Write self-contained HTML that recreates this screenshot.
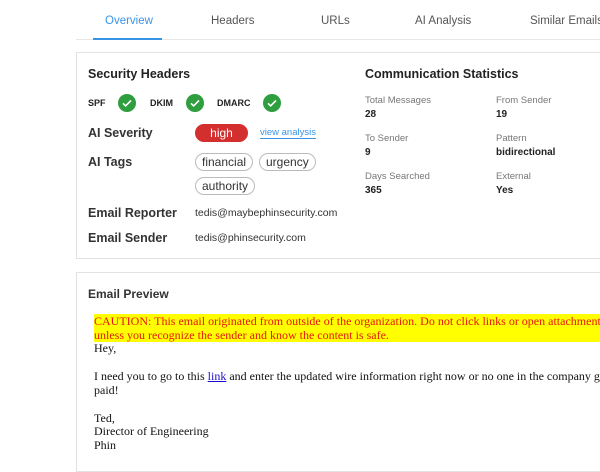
<!DOCTYPE html>
<html><head><style>
*{margin:0;padding:0;box-sizing:border-box}
body{width:600px;height:453px;overflow:hidden;background:#fff;font-family:"Liberation Sans",sans-serif;color:#222;position:relative}
.a{position:absolute;white-space:nowrap}
.tab{font-size:11.5px;color:#555;top:15px}
.h{font-size:12.5px;font-weight:bold;color:#222}
.lbl{font-size:12.5px;font-weight:bold;color:#333}
.small{font-size:9px;font-weight:bold;color:#222}
.chk{position:absolute;width:18px;height:18px;border-radius:50%;background:#2e9e3e}
.chk svg{position:absolute;left:3px;top:3px}
.pill{position:absolute;height:18px;border:1px solid #bbb;border-radius:9px;font-size:12px;line-height:16px;padding:0 6px;color:#333}
.sl{font-size:9.5px;color:#777}
.sv{font-size:10px;font-weight:bold;color:#222}
.card{position:absolute;border:1px solid #e2e2e2;background:#fff}
.serif{font-family:"Liberation Serif",serif;font-size:12px;color:#111}
</style></head><body>
<div class="a tab" style="left:105px;color:#3a94e6">Overview</div>
<div class="a tab" style="left:211px">Headers</div>
<div class="a tab" style="left:321px">URLs</div>
<div class="a tab" style="left:415px">AI Analysis</div>
<div class="a tab" style="left:530px">Similar Emails</div>
<div class="a" style="left:76px;top:39px;width:524px;height:1px;background:#e6e6e6"></div>
<div class="a" style="left:93px;top:38px;width:69px;height:2px;background:#3a94e6"></div>

<div class="card" style="left:76px;top:52px;width:530px;height:207px"></div>
<div class="a h" style="left:88px;top:67px">Security Headers</div>
<div class="a small" style="left:88px;top:98px">SPF</div>
<div class="chk" style="left:118px;top:94px"><svg width="12" height="12" viewBox="0 0 12 12"><path d="M2 6.3l2.6 2.6L10 3.5" stroke="#fff" stroke-width="1.6" fill="none"/></svg></div>
<div class="a small" style="left:150px;top:98px">DKIM</div>
<div class="chk" style="left:186px;top:94px"><svg width="12" height="12" viewBox="0 0 12 12"><path d="M2 6.3l2.6 2.6L10 3.5" stroke="#fff" stroke-width="1.6" fill="none"/></svg></div>
<div class="a small" style="left:217px;top:98px">DMARC</div>
<div class="chk" style="left:263px;top:94px"><svg width="12" height="12" viewBox="0 0 12 12"><path d="M2 6.3l2.6 2.6L10 3.5" stroke="#fff" stroke-width="1.6" fill="none"/></svg></div>

<div class="a lbl" style="left:88px;top:126px">AI Severity</div>
<div class="pill" style="left:195px;top:124px;width:53px;background:#d32f2f;border-color:#d32f2f;color:#fff;text-align:center">high</div>
<div class="a" style="left:260px;top:127px;font-size:9.5px;color:#3a94e6;border-bottom:1px solid #3a94e6;line-height:11px">view analysis</div>

<div class="a lbl" style="left:88px;top:155px">AI Tags</div>
<div class="pill" style="left:195px;top:153px">financial</div>
<div class="pill" style="left:259px;top:153px">urgency</div>
<div class="pill" style="left:195px;top:177px">authority</div>

<div class="a lbl" style="left:88px;top:206px">Email Reporter</div>
<div class="a" style="left:195px;top:207px;font-size:10.5px;color:#333">tedis@maybephinsecurity.com</div>
<div class="a lbl" style="left:88px;top:231px">Email Sender</div>
<div class="a" style="left:195px;top:232px;font-size:10.5px;color:#333">tedis@phinsecurity.com</div>

<div class="a h" style="left:365px;top:67px">Communication Statistics</div>
<div class="a sl" style="left:365px;top:95px">Total Messages</div>
<div class="a sv" style="left:365px;top:109px">28</div>
<div class="a sl" style="left:496px;top:95px">From Sender</div>
<div class="a sv" style="left:496px;top:109px">19</div>
<div class="a sl" style="left:365px;top:133px">To Sender</div>
<div class="a sv" style="left:365px;top:147px">9</div>
<div class="a sl" style="left:496px;top:133px">Pattern</div>
<div class="a sv" style="left:496px;top:147px">bidirectional</div>
<div class="a sl" style="left:365px;top:171px">Days Searched</div>
<div class="a sv" style="left:365px;top:185px">365</div>
<div class="a sl" style="left:496px;top:171px">External</div>
<div class="a sv" style="left:496px;top:185px">Yes</div>

<div class="card" style="left:76px;top:272px;width:530px;height:200px"></div>
<div class="a" style="left:88px;top:287px;font-size:12px;font-weight:bold;color:#333">Email Preview</div>
<div class="a" style="left:94px;top:314px;width:506px;height:28px;background:#ffff00"></div>
<div class="a serif" style="left:94px;top:315px;color:#e8160c;line-height:13.8px">CAUTION: This email originated from outside of the organization. Do not click links or open attachments<br>unless you recognize the sender and know the content is safe.</div>
<div class="a serif" style="left:94px;top:342px;line-height:13.9px">Hey,<br><br>I need you to go to this <span style="color:#1a0dcc;text-decoration:underline">link</span> and enter the updated wire information right now or no one in the company gets<br>paid!<br><br>Ted,<br>Director of Engineering<br>Phin</div>
</body></html>
